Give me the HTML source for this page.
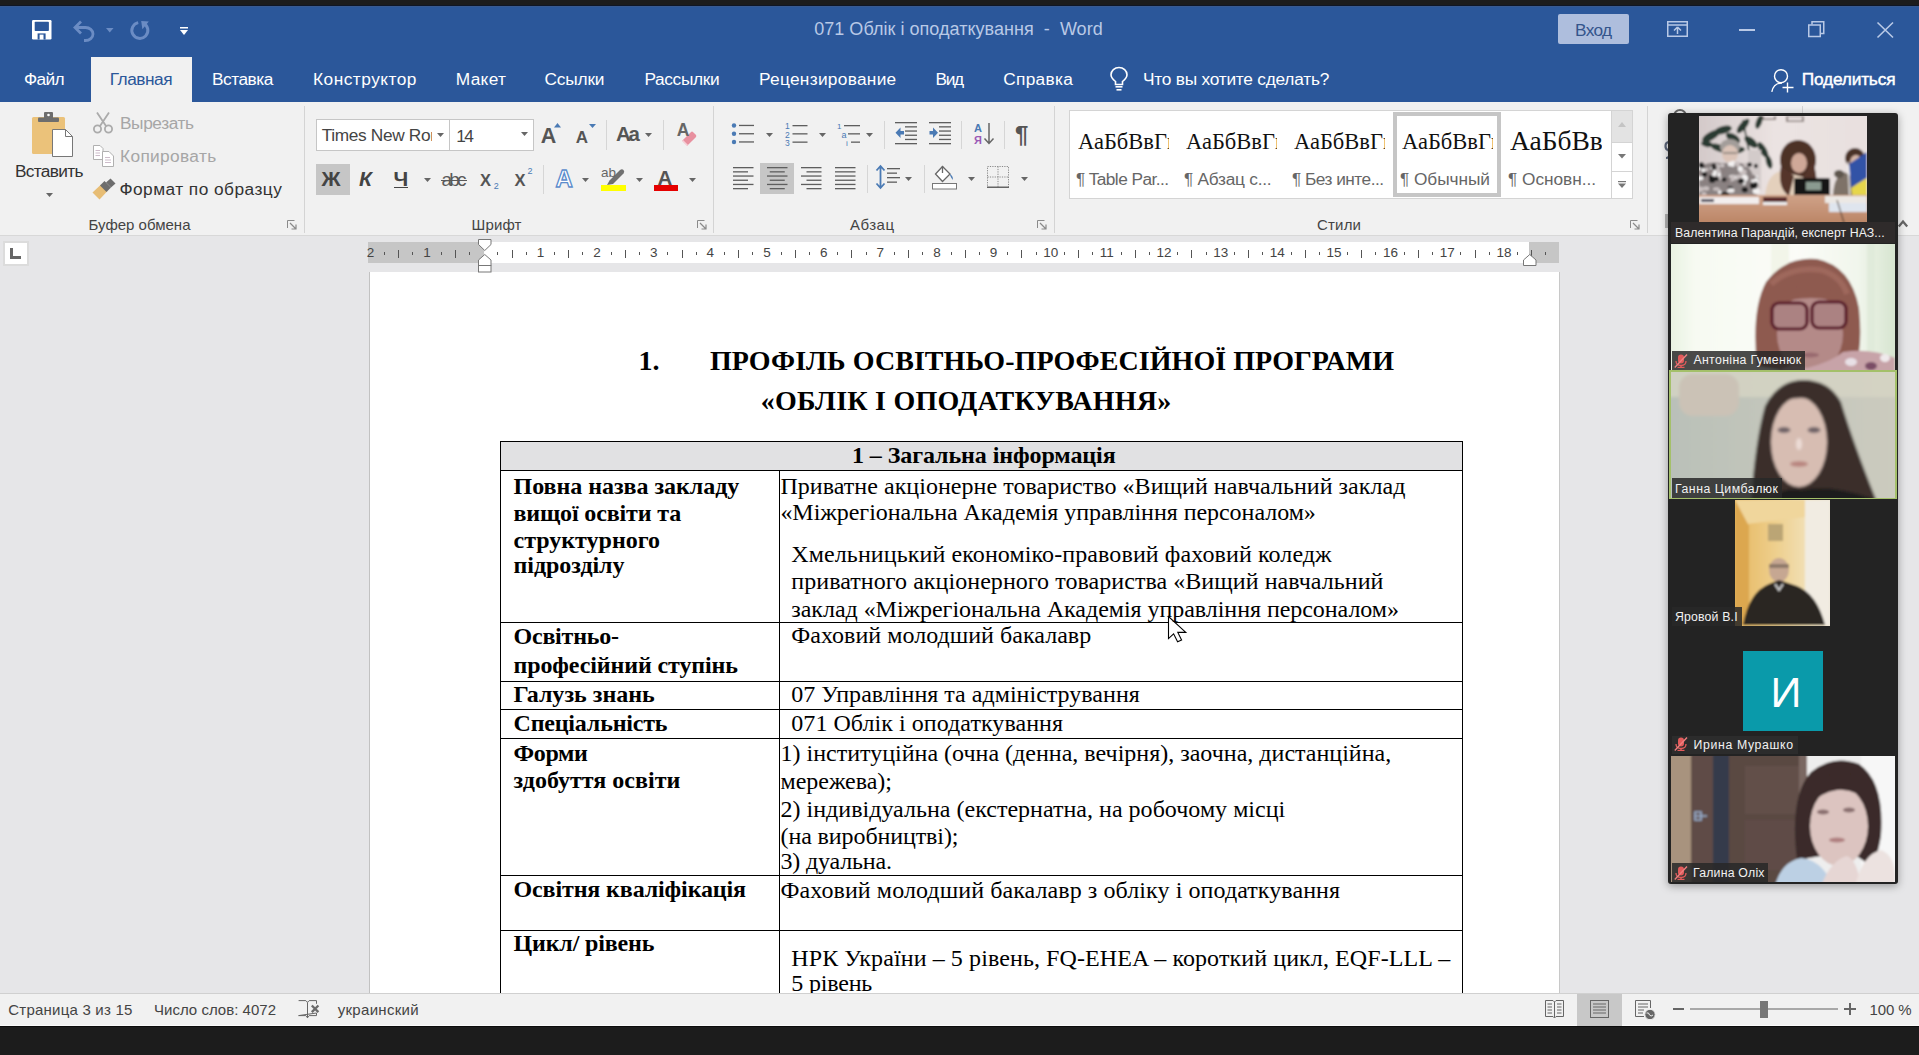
<!DOCTYPE html>
<html><head><meta charset="utf-8"><title>Word</title>
<style>*{margin:0;padding:0;box-sizing:border-box}
html,body{width:1919px;height:1055px;overflow:hidden;background:#e6e6e6;font-family:"Liberation Sans",sans-serif}
.a{position:absolute}
.t{position:absolute;white-space:pre;line-height:1}
svg{position:absolute;overflow:visible}
</style></head><body>
<div class="a" style="left:0px;top:0px;width:1919px;height:6px;background:#1c1c1c;"></div>
<div class="a" style="left:0px;top:6px;width:1919px;height:96px;background:#2b579a;"></div>
<div class="a" style="left:0px;top:102px;width:1919px;height:134px;background:#f1f1f1;"></div>
<div class="a" style="left:0px;top:235px;width:1919px;height:1px;background:#d8d8d8;"></div>
<div class="a" style="left:0px;top:236px;width:1919px;height:757px;background:#e6e6e8;"></div>
<div class="a" style="left:370px;top:272px;width:1189px;height:721px;background:#fff;"></div>
<div class="a" style="left:369px;top:272px;width:1px;height:721px;background:#c2c2c2;"></div>
<div class="a" style="left:1559px;top:272px;width:1px;height:721px;background:#c8c8c8;"></div>
<div class="a" style="left:501px;top:442px;width:962px;height:28px;background:#e1e1e3;"></div>
<div class="a" style="left:500px;top:441px;width:963px;height:1px;background:#000;"></div>
<div class="a" style="left:500px;top:470px;width:963px;height:1px;background:#000;"></div>
<div class="a" style="left:500px;top:622px;width:963px;height:1px;background:#000;"></div>
<div class="a" style="left:500px;top:681px;width:963px;height:1px;background:#000;"></div>
<div class="a" style="left:500px;top:709px;width:963px;height:1px;background:#000;"></div>
<div class="a" style="left:500px;top:738px;width:963px;height:1px;background:#000;"></div>
<div class="a" style="left:500px;top:875px;width:963px;height:1px;background:#000;"></div>
<div class="a" style="left:500px;top:930px;width:963px;height:1px;background:#000;"></div>
<div class="a" style="left:500px;top:441px;width:1px;height:552px;background:#000;"></div>
<div class="a" style="left:1462px;top:441px;width:1px;height:552px;background:#000;"></div>
<div class="a" style="left:779px;top:470px;width:1px;height:523px;background:#000;"></div>
<svg style="left:31.5px;top:19.5px;" width="20" height="20" viewBox="0 0 20 20"><rect x="0" y="0" width="19.5" height="19.5" rx="1.2" fill="#fff"/><rect x="2.7" y="1.8" width="14.2" height="9.2" rx="0.8" fill="#2b579a"/><rect x="5.6" y="13.4" width="8" height="6.1" fill="#2b579a"/><rect x="7.6" y="14.6" width="3.9" height="4.9" fill="#fff"/></svg>
<svg style="left:73px;top:20px;" width="23" height="21" viewBox="0 0 23 21"><path d="M8 1.5 L2 7.5 L8 13.5" fill="none" stroke="#6b8cc4" stroke-width="2.8" stroke-linejoin="miter"/><path d="M2.5 7.5 H12.5 A7.5 6.5 0 0 1 12.5 20.5 H11" fill="none" stroke="#6b8cc4" stroke-width="2.8"/></svg>
<svg style="left:105.5px;top:27.5px;" width="7.5" height="4.5" viewBox="0 0 7.5 4.5"><path d="M0 0H7.5L3.75 4.5Z" fill="#6b8cc4"/></svg>
<svg style="left:129.5px;top:20px;" width="21" height="21" viewBox="0 0 21 21"><path d="M8.2 2.6 A8 8 0 1 0 13.5 3.3" fill="none" stroke="#6b8cc4" stroke-width="3"/><path d="M11.2 0.9 L18.8 1.6 L12.4 9.2 Z" fill="#6b8cc4"/></svg>
<svg style="left:180px;top:27px;" width="8" height="9" viewBox="0 0 8 9"><rect x="0" y="0" width="8" height="1.5" fill="#fff"/><path d="M0 3H8L4 8Z" fill="#fff"/></svg>
<div class="a" style="left:1558px;top:14px;width:71px;height:30px;background:#aebedd;border-radius:2px;"></div>
<svg style="left:1667px;top:21px;" width="21" height="16" viewBox="0 0 21 16"><rect x="0.75" y="0.75" width="19.5" height="14.5" fill="none" stroke="#b9c9e6" stroke-width="1.5"/><line x1="0.75" y1="4" x2="20" y2="4" stroke="#b9c9e6" stroke-width="1.5"/><path d="M10.5 6 L7 9.5 M10.5 6 L14 9.5 M10.5 6.5 V13" stroke="#b9c9e6" stroke-width="1.5" fill="none"/></svg>
<div class="a" style="left:1739px;top:29px;width:16px;height:1.6px;background:#b9c9e6;"></div>
<svg style="left:1808px;top:21px;" width="17" height="16" viewBox="0 0 17 16"><rect x="0.75" y="4" width="11.5" height="11.5" fill="none" stroke="#b9c9e6" stroke-width="1.5"/><path d="M4 3.5 V0.75 H15.75 V12.5 H12.5" fill="none" stroke="#b9c9e6" stroke-width="1.5"/></svg>
<svg style="left:1876.5px;top:21.5px;" width="17" height="16" viewBox="0 0 17 16"><path d="M0.5 0.5 L16 15.5 M16 0.5 L0.5 15.5" stroke="#b9c9e6" stroke-width="1.6"/></svg>
<div class="a" style="left:91px;top:57px;width:101px;height:46px;background:#f1f1f1;"></div>
<svg style="left:1109.5px;top:67px;" width="18" height="24" viewBox="0 0 18 24"><path d="M5.5 17.5 V14.5 C3 12.5 1 10.5 1 7.8 A8 7.3 0 0 1 17 7.8 C17 10.5 15 12.5 12.5 14.5 V17.5 Z" fill="none" stroke="#fff" stroke-width="1.6"/><rect x="5.5" y="19" width="7" height="1.6" fill="#fff"/><rect x="6.5" y="22" width="5" height="1.6" fill="#fff"/></svg>
<svg style="left:1770.5px;top:68.5px;" width="24" height="24" viewBox="0 0 24 24"><circle cx="10" cy="7.2" r="6.5" fill="none" stroke="#fff" stroke-width="1.4"/><path d="M0.8 22.8 C2 17 6 14 11 14" fill="none" stroke="#fff" stroke-width="1.4"/><path d="M16.5 13.5 V23.5 M11.5 18.5 H22.5" stroke="#fff" stroke-width="1.4"/></svg>
<div class="a" style="left:304px;top:106px;width:1px;height:127px;background:#d4d4d4;"></div>
<div class="a" style="left:713px;top:106px;width:1px;height:127px;background:#d4d4d4;"></div>
<div class="a" style="left:1054px;top:106px;width:1px;height:127px;background:#d4d4d4;"></div>
<div class="a" style="left:1647px;top:106px;width:1px;height:127px;background:#d4d4d4;"></div>
<svg style="left:287px;top:220px;" width="10" height="9" viewBox="0 0 10 9"><path d="M0.5 8 V0.5 H7.5" fill="none" stroke="#8a8a8a" stroke-width="1"/><path d="M3 3 L8.5 8.5 M9 4.5 V9 H4.5" fill="none" stroke="#8a8a8a" stroke-width="1.2"/></svg>
<svg style="left:697px;top:220px;" width="10" height="9" viewBox="0 0 10 9"><path d="M0.5 8 V0.5 H7.5" fill="none" stroke="#8a8a8a" stroke-width="1"/><path d="M3 3 L8.5 8.5 M9 4.5 V9 H4.5" fill="none" stroke="#8a8a8a" stroke-width="1.2"/></svg>
<svg style="left:1037px;top:220px;" width="10" height="9" viewBox="0 0 10 9"><path d="M0.5 8 V0.5 H7.5" fill="none" stroke="#8a8a8a" stroke-width="1"/><path d="M3 3 L8.5 8.5 M9 4.5 V9 H4.5" fill="none" stroke="#8a8a8a" stroke-width="1.2"/></svg>
<svg style="left:1630px;top:220px;" width="10" height="9" viewBox="0 0 10 9"><path d="M0.5 8 V0.5 H7.5" fill="none" stroke="#8a8a8a" stroke-width="1"/><path d="M3 3 L8.5 8.5 M9 4.5 V9 H4.5" fill="none" stroke="#8a8a8a" stroke-width="1.2"/></svg>
<svg style="left:32px;top:112px;" width="42" height="46" viewBox="0 0 42 46"><rect x="0" y="5" width="33" height="37" rx="1.5" fill="#ebc27a"/><rect x="6" y="5.5" width="21" height="4.5" rx="1" fill="#6d6d6d"/><rect x="12" y="0" width="9" height="7" rx="1" fill="#6d6d6d"/><circle cx="16.5" cy="3" r="1.3" fill="#fff"/><path d="M20.5 17.5 H33.5 L40.5 24.5 V44.5 H20.5 Z" fill="#fff" stroke="#777" stroke-width="1"/><path d="M33.5 17.5 V24.5 H40.5" fill="none" stroke="#777" stroke-width="1"/></svg>
<svg style="left:46px;top:193px;" width="7" height="4" viewBox="0 0 7 4"><path d="M0 0H7L3.5 4Z" fill="#666"/></svg>
<svg style="left:93px;top:112px;" width="20" height="22" viewBox="0 0 20 22"><path d="M4 0.5 L13 14 M16 0.5 L7 14" stroke="#ababab" stroke-width="1.8" fill="none"/><circle cx="4.5" cy="17" r="3.6" fill="none" stroke="#ababab" stroke-width="1.8"/><circle cx="15.5" cy="17" r="3.6" fill="none" stroke="#ababab" stroke-width="1.8"/></svg>
<svg style="left:93px;top:145px;" width="22" height="22" viewBox="0 0 22 22"><path d="M0.5 0.5 H7 L10 3.5 V14.5 H0.5 Z" fill="#fff" stroke="#b0b0b0"/><path d="M9.5 6.5 H16 L20.5 11 V21.5 H9.5 Z" fill="#fff" stroke="#b0b0b0"/><path d="M2.5 5.5H7M2.5 8H7M2.5 10.5H7M12 12.5H17M12 15H18M12 17.5H18" stroke="#c7b4c4" stroke-width="0.9"/></svg>
<svg style="left:92px;top:178.5px;" width="24" height="21" viewBox="0 0 24 21"><path d="M0.5 13.5 L9 5.5 L15.5 12 L7.5 20.5 Z" fill="#e7bd75"/><path d="M8 6.5 L12.5 2 L19 8.5 L14.5 13 Z" fill="#6d6d6d"/><path d="M14 3.5 L18.5 -0.5 L23.5 4.5 L19 8.5 Z" fill="#6d6d6d"/></svg>
<div class="a" style="left:316px;top:119px;width:134px;height:32px;background:#fff;border:1px solid #c6c6c6;"></div>
<div class="a" style="left:449px;top:119px;width:85px;height:32px;background:#fff;border:1px solid #c6c6c6;"></div>
<div class="a" style="left:317px;top:120px;width:115px;height:30px;overflow:hidden"><div class="t" style="left:4.7px;top:7.3px;font-family:'Liberation Sans',sans-serif;font-size:17.3px;color:#444;letter-spacing:-0.35px">Times New Roman</div></div>
<svg style="left:437px;top:132.5px;" width="7" height="4" viewBox="0 0 7 4"><path d="M0 0H7L3.5 4Z" fill="#666"/></svg>
<svg style="left:521px;top:132px;" width="7" height="4" viewBox="0 0 7 4"><path d="M0 0H7L3.5 4Z" fill="#666"/></svg>
<svg style="left:554px;top:123px;" width="7" height="4.5" viewBox="0 0 7 4.5"><path d="M0 4.5H7L3.5 0Z" fill="#4a7ab4"/></svg>
<svg style="left:588.5px;top:124px;" width="7" height="4" viewBox="0 0 7 4"><path d="M0 0H7L3.5 4Z" fill="#4a7ab4"/></svg>
<div class="a" style="left:606px;top:120px;width:1px;height:30px;background:#d6d6d6;"></div>
<svg style="left:645px;top:132.7px;" width="7" height="4" viewBox="0 0 7 4"><path d="M0 0H7L3.5 4Z" fill="#666"/></svg>
<div class="a" style="left:663px;top:120px;width:1px;height:30px;background:#d6d6d6;"></div>
<svg style="left:681px;top:129.5px;" width="16" height="16" viewBox="0 0 16 16"><path d="M1.2 10.8 L9.8 2.2 Q11 1 12.2 2.2 L14.8 4.8 Q16 6 14.8 7.2 L6.2 15.8 Z" fill="#e8909f"/><path d="M1.5 10.5 L6.5 15.5" stroke="#f6d0d8" stroke-width="1.6"/></svg>
<div class="a" style="left:316px;top:164px;width:34px;height:31px;background:#c6c6c6;"></div>
<div class="a" style="left:394px;top:186.5px;width:14px;height:1.4px;background:#444;"></div>
<svg style="left:423.5px;top:178px;" width="7" height="4" viewBox="0 0 7 4"><path d="M0 0H7L3.5 4Z" fill="#666"/></svg>
<div class="a" style="left:441px;top:179.5px;width:26px;height:1.2px;background:#5a5a5a;"></div>
<div class="a" style="left:543px;top:165px;width:1px;height:29px;background:#d6d6d6;"></div>
<svg style="left:582px;top:178px;" width="7" height="4" viewBox="0 0 7 4"><path d="M0 0H7L3.5 4Z" fill="#666"/></svg>
<svg style="left:606px;top:168.5px;" width="19" height="17" viewBox="0 0 19 17"><path d="M1 16 L3.5 11.5 L14 1 Q16 -0.5 17.5 1 Q19 2.5 17.5 4.5 L7 15 Z" fill="#707070"/></svg>
<div class="a" style="left:601px;top:185px;width:24.5px;height:6px;background:#ffff00;"></div>
<svg style="left:636px;top:178px;" width="7" height="4" viewBox="0 0 7 4"><path d="M0 0H7L3.5 4Z" fill="#666"/></svg>
<div class="a" style="left:654px;top:185px;width:24px;height:6px;background:#e50000;"></div>
<svg style="left:689px;top:178px;" width="7" height="4" viewBox="0 0 7 4"><path d="M0 0H7L3.5 4Z" fill="#666"/></svg>
<svg style="left:731px;top:123px;" width="24" height="23" viewBox="0 0 24 23"><circle cx="3" cy="2.5" r="2.2" fill="#4a7ab4"/><circle cx="3" cy="10.8" r="2.2" fill="#4a7ab4"/><circle cx="3" cy="19" r="2.2" fill="#4a7ab4"/><rect x="8" y="1.8" width="15" height="1.3" fill="#5e5e5e"/><rect x="8" y="10.1" width="15" height="1.3" fill="#5e5e5e"/><rect x="8" y="18.3" width="15" height="1.3" fill="#5e5e5e"/></svg>
<svg style="left:766px;top:132.5px;" width="7" height="4" viewBox="0 0 7 4"><path d="M0 0H7L3.5 4Z" fill="#666"/></svg>
<svg style="left:785px;top:122px;" width="23" height="25" viewBox="0 0 23 25"><text x="0" y="7" font-family="Liberation Sans" font-size="8.5" fill="#4a7ab4">1</text><text x="0" y="15.5" font-family="Liberation Sans" font-size="8.5" fill="#4a7ab4">2</text><text x="0" y="24" font-family="Liberation Sans" font-size="8.5" fill="#4a7ab4">3</text><rect x="7.5" y="3" width="15" height="1.3" fill="#5e5e5e"/><rect x="7.5" y="11.2" width="15" height="1.3" fill="#5e5e5e"/><rect x="7.5" y="19.5" width="15" height="1.3" fill="#5e5e5e"/></svg>
<svg style="left:819px;top:132.5px;" width="7" height="4" viewBox="0 0 7 4"><path d="M0 0H7L3.5 4Z" fill="#666"/></svg>
<svg style="left:837px;top:122px;" width="24" height="25" viewBox="0 0 24 25"><text x="0" y="7" font-family="Liberation Sans" font-size="8" fill="#4a7ab4">1</text><text x="4.5" y="15.5" font-family="Liberation Sans" font-size="9" fill="#4a7ab4">a</text><text x="9" y="24" font-family="Liberation Sans" font-size="8" fill="#4a7ab4">i</text><rect x="7" y="3" width="16" height="1.3" fill="#5e5e5e"/><rect x="11" y="11.2" width="12" height="1.3" fill="#5e5e5e"/><rect x="14" y="19.5" width="9" height="1.3" fill="#5e5e5e"/></svg>
<svg style="left:866px;top:132.5px;" width="7" height="4" viewBox="0 0 7 4"><path d="M0 0H7L3.5 4Z" fill="#666"/></svg>
<div class="a" style="left:884px;top:121px;width:1px;height:28px;background:#d6d6d6;"></div>
<svg style="left:895px;top:122px;" width="23" height="22" viewBox="0 0 23 22"><rect x="0" y="0" width="22" height="1.3" fill="#5e5e5e"/><rect x="10" y="4.2" width="12" height="1.3" fill="#5e5e5e"/><rect x="10" y="8.4" width="12" height="1.3" fill="#5e5e5e"/><rect x="10" y="12.6" width="12" height="1.3" fill="#5e5e5e"/><rect x="10" y="16.8" width="12" height="1.3" fill="#5e5e5e"/><rect x="0" y="21" width="22" height="1.3" fill="#5e5e5e"/><path d="M0.5 10.7 L5.5 5.5 V9 H9 V12.5 H5.5 V16 Z" fill="#4a7ab4"/></svg>
<svg style="left:928.5px;top:122px;" width="23" height="22" viewBox="0 0 23 22"><rect x="0" y="0" width="22" height="1.3" fill="#5e5e5e"/><rect x="10" y="4.2" width="12" height="1.3" fill="#5e5e5e"/><rect x="10" y="8.4" width="12" height="1.3" fill="#5e5e5e"/><rect x="10" y="12.6" width="12" height="1.3" fill="#5e5e5e"/><rect x="10" y="16.8" width="12" height="1.3" fill="#5e5e5e"/><rect x="0" y="21" width="22" height="1.3" fill="#5e5e5e"/><path d="M9 10.7 L4 5.5 V9 H0.5 V12.5 H4 V16 Z" fill="#4a7ab4"/></svg>
<div class="a" style="left:961px;top:121px;width:1px;height:28px;background:#d6d6d6;"></div>
<svg style="left:974px;top:122px;" width="20" height="23" viewBox="0 0 20 23"><text x="0" y="10" font-family="Liberation Sans" font-weight="bold" font-size="11" fill="#4a7ab4">A</text><text x="0" y="21.5" font-family="Liberation Sans" font-weight="bold" font-size="11" fill="#9b59b6">Я</text><path d="M15 1 V21 M10.5 16.5 L15 21.5 L19.5 16.5" fill="none" stroke="#666" stroke-width="1.5"/></svg>
<div class="a" style="left:1004px;top:121px;width:1px;height:28px;background:#d6d6d6;"></div>
<div class="a" style="left:760px;top:163px;width:34px;height:31px;background:#c6c6c6;"></div>
<svg style="left:732.5px;top:166.5px;" width="22" height="22" viewBox="0 0 22 22"><rect x="0" y="0.0" width="20.5" height="1.3" fill="#5e5e5e"/><rect x="0" y="4.2" width="15" height="1.3" fill="#5e5e5e"/><rect x="0" y="8.4" width="20.5" height="1.3" fill="#5e5e5e"/><rect x="0" y="12.6" width="15" height="1.3" fill="#5e5e5e"/><rect x="0" y="16.8" width="20.5" height="1.3" fill="#5e5e5e"/><rect x="0" y="21.0" width="15" height="1.3" fill="#5e5e5e"/></svg>
<svg style="left:767px;top:166.5px;" width="22" height="22" viewBox="0 0 22 22"><rect x="0" y="0.0" width="20.5" height="1.3" fill="#5e5e5e"/><rect x="2.75" y="4.2" width="15" height="1.3" fill="#5e5e5e"/><rect x="0" y="8.4" width="20.5" height="1.3" fill="#5e5e5e"/><rect x="2.75" y="12.6" width="15" height="1.3" fill="#5e5e5e"/><rect x="0" y="16.8" width="20.5" height="1.3" fill="#5e5e5e"/><rect x="2.75" y="21.0" width="15" height="1.3" fill="#5e5e5e"/></svg>
<svg style="left:801px;top:166.5px;" width="22" height="22" viewBox="0 0 22 22"><rect x="0" y="0.0" width="20.5" height="1.3" fill="#5e5e5e"/><rect x="5.5" y="4.2" width="15" height="1.3" fill="#5e5e5e"/><rect x="0" y="8.4" width="20.5" height="1.3" fill="#5e5e5e"/><rect x="5.5" y="12.6" width="15" height="1.3" fill="#5e5e5e"/><rect x="0" y="16.8" width="20.5" height="1.3" fill="#5e5e5e"/><rect x="5.5" y="21.0" width="15" height="1.3" fill="#5e5e5e"/></svg>
<svg style="left:835px;top:166.5px;" width="22" height="22" viewBox="0 0 22 22"><rect x="0" y="0.0" width="20.5" height="1.3" fill="#5e5e5e"/><rect x="0" y="4.2" width="20.5" height="1.3" fill="#5e5e5e"/><rect x="0" y="8.4" width="20.5" height="1.3" fill="#5e5e5e"/><rect x="0" y="12.6" width="20.5" height="1.3" fill="#5e5e5e"/><rect x="0" y="16.8" width="20.5" height="1.3" fill="#5e5e5e"/><rect x="0" y="21.0" width="20.5" height="1.3" fill="#5e5e5e"/></svg>
<div class="a" style="left:866.5px;top:165px;width:1px;height:28px;background:#d6d6d6;"></div>
<svg style="left:876px;top:165px;" width="24" height="24" viewBox="0 0 24 24"><path d="M4.5 2 V22 M0.5 5.5 L4.5 1 L8.5 5.5 M0.5 18.5 L4.5 23 L8.5 18.5" fill="none" stroke="#4a7ab4" stroke-width="1.8"/><rect x="11" y="3" width="13" height="1.3" fill="#5e5e5e"/><rect x="11" y="7.5" width="10" height="1.3" fill="#5e5e5e"/><rect x="11" y="12" width="13" height="1.3" fill="#5e5e5e"/><rect x="11" y="16.5" width="10" height="1.3" fill="#5e5e5e"/></svg>
<svg style="left:905px;top:177px;" width="7" height="4" viewBox="0 0 7 4"><path d="M0 0H7L3.5 4Z" fill="#666"/></svg>
<div class="a" style="left:923.5px;top:165px;width:1px;height:28px;background:#d6d6d6;"></div>
<svg style="left:932px;top:165px;" width="26" height="25" viewBox="0 0 26 25"><path d="M10.5 1.5 L3.5 9 L10.5 16.5 L18 9 Z" fill="#fff" stroke="#666" stroke-width="1.3"/><path d="M10.5 1 V8" stroke="#666" stroke-width="1.3"/><path d="M18.5 9 Q21.5 12 21 15 Q19 13 18 10" fill="#4a7ab4"/><rect x="0.5" y="18.5" width="24" height="5.5" fill="#fff" stroke="#777"/></svg>
<svg style="left:968px;top:177px;" width="7" height="4" viewBox="0 0 7 4"><path d="M0 0H7L3.5 4Z" fill="#666"/></svg>
<svg style="left:986.5px;top:165.5px;" width="22" height="22" viewBox="0 0 22 22"><rect x="0.5" y="0.5" width="21" height="21" fill="none" stroke="#888" stroke-width="1" stroke-dasharray="1.2 1.2"/><path d="M11 0.5 V21.5 M0.5 11 H21.5" stroke="#888" stroke-width="1" stroke-dasharray="1.2 1.2"/><rect x="0" y="20.5" width="22" height="1.5" fill="#666"/></svg>
<svg style="left:1020.5px;top:177px;" width="7" height="4" viewBox="0 0 7 4"><path d="M0 0H7L3.5 4Z" fill="#666"/></svg>
<div class="a" style="left:1068.5px;top:109.5px;width:543px;height:89px;background:#fff;border:1px solid #d4d4d4;"></div>
<div class="a" style="left:1610.5px;top:109.5px;width:22.5px;height:89px;background:#fff;border:1px solid #d4d4d4;"></div>
<div class="a" style="left:1611.5px;top:110.5px;width:20.5px;height:31px;background:#e3e3e3;"></div>
<div class="a" style="left:1611px;top:141.5px;width:22px;height:1px;background:#d4d4d4;"></div>
<div class="a" style="left:1611px;top:170.5px;width:22px;height:1px;background:#d4d4d4;"></div>
<svg style="left:1618px;top:122px;" width="8" height="5" viewBox="0 0 8 5"><path d="M0 5H8L4 0Z" fill="#c4c4c4"/></svg>
<svg style="left:1618px;top:154px;" width="8" height="4.5" viewBox="0 0 8 4.5"><path d="M0 0H8L4.0 4.5Z" fill="#777"/></svg>
<svg style="left:1618px;top:181px;" width="8" height="7" viewBox="0 0 8 7"><rect x="0" y="0" width="8" height="1.2" fill="#777"/><path d="M0 2.5H8L4 7Z" fill="#777"/></svg>
<div class="a" style="left:1393px;top:112px;width:108px;height:85px;background:none;border:4px solid #c6c6c6;"></div>
<div class="a" style="left:1078px;top:126px;width:90.5px;height:30px;overflow:hidden"><div class="t" style="left:0;top:5.06px;font-family:'Liberation Serif',serif;font-size:22.5px;color:#111">АаБбВвГг</div></div>
<div class="a" style="left:1186px;top:126px;width:90.5px;height:30px;overflow:hidden"><div class="t" style="left:0;top:5.06px;font-family:'Liberation Serif',serif;font-size:22.5px;color:#111">АаБбВвГг</div></div>
<div class="a" style="left:1294px;top:126px;width:90.5px;height:30px;overflow:hidden"><div class="t" style="left:0;top:5.06px;font-family:'Liberation Serif',serif;font-size:22.5px;color:#111">АаБбВвГг</div></div>
<div class="a" style="left:1402px;top:126px;width:90.5px;height:30px;overflow:hidden"><div class="t" style="left:0;top:5.06px;font-family:'Liberation Serif',serif;font-size:22.5px;color:#111">АаБбВвГг</div></div>
<div class="a" style="left:1510px;top:126px;width:92px;height:30px;overflow:hidden"><div class="t" style="left:0;top:0.87px;font-family:'Liberation Serif',serif;font-size:27.5px;color:#111">АаБбВв</div></div>
<div class="a" style="left:1802px;top:106px;width:1px;height:8px;background:#d4d4d4;"></div>
<svg style="left:1672px;top:108px;" width="16" height="8" viewBox="0 0 16 8"><circle cx="8" cy="8" r="6" fill="none" stroke="#666" stroke-width="2"/></svg>
<svg style="left:1664.5px;top:141px;" width="5" height="18" viewBox="0 0 5 18"><path d="M4.5 1 Q0.5 1 0.5 5 Q0.5 8.5 3 9 Q4.5 10 4.5 13 Q4.5 17 1 17" fill="none" stroke="#5a6478" stroke-width="2.2"/></svg>
<div class="a" style="left:1664.5px;top:214px;width:4px;height:14px;background:#8a8a8a;opacity:0.6"></div>
<div class="a" style="left:3px;top:241px;width:26px;height:25px;background:#fff;border:2px solid #dcdcdc;"></div>
<svg style="left:10px;top:248px;" width="12" height="11" viewBox="0 0 12 11"><rect x="0" y="0" width="3" height="11" fill="#666"/><rect x="0" y="8" width="11" height="3" fill="#666"/></svg>
<div class="a" style="left:368px;top:242px;width:1191px;height:21px;background:#fff;"></div>
<div class="a" style="left:368px;top:242px;width:116px;height:21px;background:#c6c6c6;"></div>
<div class="a" style="left:1529px;top:242px;width:30px;height:21px;background:#c6c6c6;"></div>
<div class="a" style="left:384.0px;top:252px;width:1px;height:3px;background:#555;"></div>
<div class="a" style="left:398.0px;top:250px;width:1px;height:7.5px;background:#555;"></div>
<div class="a" style="left:412.0px;top:252px;width:1px;height:3px;background:#555;"></div>
<div class="a" style="left:440.5px;top:252px;width:1px;height:3px;background:#555;"></div>
<div class="a" style="left:454.5px;top:250px;width:1px;height:7.5px;background:#555;"></div>
<div class="a" style="left:469.0px;top:252px;width:1px;height:3px;background:#555;"></div>
<div class="a" style="left:497.0px;top:252px;width:1px;height:3px;background:#555;"></div>
<div class="a" style="left:511.5px;top:250px;width:1px;height:7.5px;background:#555;"></div>
<div class="a" style="left:525.5px;top:252px;width:1px;height:3px;background:#555;"></div>
<div class="a" style="left:554.0px;top:252px;width:1px;height:3px;background:#555;"></div>
<div class="a" style="left:568.0px;top:250px;width:1px;height:7.5px;background:#555;"></div>
<div class="a" style="left:582.0px;top:252px;width:1px;height:3px;background:#555;"></div>
<div class="a" style="left:610.5px;top:252px;width:1px;height:3px;background:#555;"></div>
<div class="a" style="left:624.5px;top:250px;width:1px;height:7.5px;background:#555;"></div>
<div class="a" style="left:639.0px;top:252px;width:1px;height:3px;background:#555;"></div>
<div class="a" style="left:667.0px;top:252px;width:1px;height:3px;background:#555;"></div>
<div class="a" style="left:681.5px;top:250px;width:1px;height:7.5px;background:#555;"></div>
<div class="a" style="left:695.5px;top:252px;width:1px;height:3px;background:#555;"></div>
<div class="a" style="left:724.0px;top:252px;width:1px;height:3px;background:#555;"></div>
<div class="a" style="left:738.0px;top:250px;width:1px;height:7.5px;background:#555;"></div>
<div class="a" style="left:752.0px;top:252px;width:1px;height:3px;background:#555;"></div>
<div class="a" style="left:780.5px;top:252px;width:1px;height:3px;background:#555;"></div>
<div class="a" style="left:794.5px;top:250px;width:1px;height:7.5px;background:#555;"></div>
<div class="a" style="left:808.5px;top:252px;width:1px;height:3px;background:#555;"></div>
<div class="a" style="left:837.0px;top:252px;width:1px;height:3px;background:#555;"></div>
<div class="a" style="left:851.0px;top:250px;width:1px;height:7.5px;background:#555;"></div>
<div class="a" style="left:865.5px;top:252px;width:1px;height:3px;background:#555;"></div>
<div class="a" style="left:893.5px;top:252px;width:1px;height:3px;background:#555;"></div>
<div class="a" style="left:908.0px;top:250px;width:1px;height:7.5px;background:#555;"></div>
<div class="a" style="left:922.0px;top:252px;width:1px;height:3px;background:#555;"></div>
<div class="a" style="left:950.5px;top:252px;width:1px;height:3px;background:#555;"></div>
<div class="a" style="left:964.5px;top:250px;width:1px;height:7.5px;background:#555;"></div>
<div class="a" style="left:978.5px;top:252px;width:1px;height:3px;background:#555;"></div>
<div class="a" style="left:1007.0px;top:252px;width:1px;height:3px;background:#555;"></div>
<div class="a" style="left:1021.0px;top:250px;width:1px;height:7.5px;background:#555;"></div>
<div class="a" style="left:1035.5px;top:252px;width:1px;height:3px;background:#555;"></div>
<div class="a" style="left:1063.5px;top:252px;width:1px;height:3px;background:#555;"></div>
<div class="a" style="left:1078.0px;top:250px;width:1px;height:7.5px;background:#555;"></div>
<div class="a" style="left:1092.0px;top:252px;width:1px;height:3px;background:#555;"></div>
<div class="a" style="left:1120.5px;top:252px;width:1px;height:3px;background:#555;"></div>
<div class="a" style="left:1134.5px;top:250px;width:1px;height:7.5px;background:#555;"></div>
<div class="a" style="left:1148.5px;top:252px;width:1px;height:3px;background:#555;"></div>
<div class="a" style="left:1177.0px;top:252px;width:1px;height:3px;background:#555;"></div>
<div class="a" style="left:1191.0px;top:250px;width:1px;height:7.5px;background:#555;"></div>
<div class="a" style="left:1205.5px;top:252px;width:1px;height:3px;background:#555;"></div>
<div class="a" style="left:1233.5px;top:252px;width:1px;height:3px;background:#555;"></div>
<div class="a" style="left:1248.0px;top:250px;width:1px;height:7.5px;background:#555;"></div>
<div class="a" style="left:1262.0px;top:252px;width:1px;height:3px;background:#555;"></div>
<div class="a" style="left:1290.5px;top:252px;width:1px;height:3px;background:#555;"></div>
<div class="a" style="left:1304.5px;top:250px;width:1px;height:7.5px;background:#555;"></div>
<div class="a" style="left:1318.5px;top:252px;width:1px;height:3px;background:#555;"></div>
<div class="a" style="left:1347.0px;top:252px;width:1px;height:3px;background:#555;"></div>
<div class="a" style="left:1361.0px;top:250px;width:1px;height:7.5px;background:#555;"></div>
<div class="a" style="left:1375.0px;top:252px;width:1px;height:3px;background:#555;"></div>
<div class="a" style="left:1403.5px;top:252px;width:1px;height:3px;background:#555;"></div>
<div class="a" style="left:1417.5px;top:250px;width:1px;height:7.5px;background:#555;"></div>
<div class="a" style="left:1432.0px;top:252px;width:1px;height:3px;background:#555;"></div>
<div class="a" style="left:1460.0px;top:252px;width:1px;height:3px;background:#555;"></div>
<div class="a" style="left:1474.5px;top:250px;width:1px;height:7.5px;background:#555;"></div>
<div class="a" style="left:1488.5px;top:252px;width:1px;height:3px;background:#555;"></div>
<div class="a" style="left:1517.0px;top:252px;width:1px;height:3px;background:#555;"></div>
<div class="a" style="left:1531.0px;top:250px;width:1px;height:7.5px;background:#555;"></div>
<div class="a" style="left:1545.0px;top:252px;width:1px;height:3px;background:#555;"></div>
<svg style="left:477.5px;top:238.5px;" width="14" height="34" viewBox="0 0 14 34"><path d="M0.5 0.5 H13 V5.5 L6.75 11.5 L0.5 5.5 Z" fill="#fff" stroke="#777"/><path d="M6.75 15.5 L13 21 V26.5 H0.5 V21 Z" fill="#fff" stroke="#777"/><rect x="0.5" y="26.5" width="12.5" height="6.5" fill="#fff" stroke="#777"/></svg>
<svg style="left:1522.5px;top:254px;" width="14" height="12" viewBox="0 0 14 12"><path d="M6.75 0.5 L13 6 V11.5 H0.5 V6 Z" fill="#fff" stroke="#777"/></svg>
<svg style="left:1898px;top:219px;" width="10" height="8" viewBox="0 0 10 8"><path d="M0.8 7.5 L5 2.5 L9.2 7.5" fill="none" stroke="#666" stroke-width="2.2"/></svg>
<svg style="left:1167.5px;top:615.5px;" width="20" height="28" viewBox="0 0 20 28"><path d="M0.5 0.5 V22.6 L5.6 17.8 L9.6 25.8 L13.6 24 L9.8 16.4 L17.8 16.4 Z" fill="#fff" stroke="#000" stroke-width="1.1" stroke-linejoin="miter"/></svg>
<div class="t" style="left:638.6px;top:347.35px;font-family:'Liberation Serif',serif;font-size:28px;font-weight:bold;color:#000;">1.</div>
<div class="t" style="left:710px;top:347.35px;font-family:'Liberation Serif',serif;font-size:28px;font-weight:bold;color:#000;letter-spacing:0.066px;">ПРОФІЛЬ ОСВІТНЬО-ПРОФЕСІЙНОЇ ПРОГРАМИ</div>
<div class="t" style="left:760.8px;top:387.45px;font-family:'Liberation Serif',serif;font-size:28px;font-weight:bold;color:#000;letter-spacing:0.232px;">«ОБЛІК І ОПОДАТКУВАННЯ»</div>
<div class="t" style="left:852px;top:443.10px;font-family:'Liberation Serif',serif;font-size:24px;font-weight:bold;color:#000;letter-spacing:-0.083px;">1 – Загальна інформація</div>
<div class="t" style="left:513.5px;top:473.90px;font-family:'Liberation Serif',serif;font-size:24px;font-weight:bold;color:#000;letter-spacing:-0.032px;">Повна назва закладу</div>
<div class="t" style="left:513.5px;top:500.90px;font-family:'Liberation Serif',serif;font-size:24px;font-weight:bold;color:#000;letter-spacing:-0.143px;">вищої освіти та</div>
<div class="t" style="left:513.5px;top:528.40px;font-family:'Liberation Serif',serif;font-size:24px;font-weight:bold;color:#000;letter-spacing:-0.004px;">структурного</div>
<div class="t" style="left:513.5px;top:553.40px;font-family:'Liberation Serif',serif;font-size:24px;font-weight:bold;color:#000;letter-spacing:-0.052px;">підрозділу</div>
<div class="t" style="left:780.4px;top:473.70px;font-family:'Liberation Serif',serif;font-size:24px;font-weight:normal;color:#000;letter-spacing:0.038px;">Приватне акціонерне товариство «Вищий навчальний заклад</div>
<div class="t" style="left:780.4px;top:500.30px;font-family:'Liberation Serif',serif;font-size:24px;font-weight:normal;color:#000;letter-spacing:-0.043px;">«Міжрегіональна Академія управління персоналом»</div>
<div class="t" style="left:791.3px;top:541.50px;font-family:'Liberation Serif',serif;font-size:24px;font-weight:normal;color:#000;letter-spacing:0.100px;">Хмельницький економіко-правовий фаховий коледж</div>
<div class="t" style="left:791.3px;top:569.00px;font-family:'Liberation Serif',serif;font-size:24px;font-weight:normal;color:#000;letter-spacing:0.050px;">приватного акціонерного товариства «Вищий навчальний</div>
<div class="t" style="left:791.3px;top:596.50px;font-family:'Liberation Serif',serif;font-size:24px;font-weight:normal;color:#000;letter-spacing:-0.043px;">заклад «Міжрегіональна Академія управління персоналом»</div>
<div class="t" style="left:513.5px;top:624.30px;font-family:'Liberation Serif',serif;font-size:24px;font-weight:bold;color:#000;letter-spacing:-0.219px;">Освітньо-</div>
<div class="t" style="left:513.5px;top:652.50px;font-family:'Liberation Serif',serif;font-size:24px;font-weight:bold;color:#000;letter-spacing:-0.111px;">професійний ступінь</div>
<div class="t" style="left:791.3px;top:623.00px;font-family:'Liberation Serif',serif;font-size:24px;font-weight:normal;color:#000;letter-spacing:0.027px;">Фаховий молодший бакалавр</div>
<div class="t" style="left:513.5px;top:682.10px;font-family:'Liberation Serif',serif;font-size:24px;font-weight:bold;color:#000;letter-spacing:0.012px;">Галузь знань</div>
<div class="t" style="left:791.3px;top:682.10px;font-family:'Liberation Serif',serif;font-size:24px;font-weight:normal;color:#000;letter-spacing:0.018px;">07 Управління та адміністрування</div>
<div class="t" style="left:513.5px;top:710.70px;font-family:'Liberation Serif',serif;font-size:24px;font-weight:bold;color:#000;letter-spacing:-0.193px;">Спеціальність</div>
<div class="t" style="left:791.3px;top:710.70px;font-family:'Liberation Serif',serif;font-size:24px;font-weight:normal;color:#000;letter-spacing:0.049px;">071 Облік і оподаткування</div>
<div class="t" style="left:513.5px;top:740.80px;font-family:'Liberation Serif',serif;font-size:24px;font-weight:bold;color:#000;letter-spacing:-0.345px;">Форми</div>
<div class="t" style="left:513.5px;top:768.40px;font-family:'Liberation Serif',serif;font-size:24px;font-weight:bold;color:#000;letter-spacing:0.015px;">здобуття освіти</div>
<div class="t" style="left:780.5px;top:741.30px;font-family:'Liberation Serif',serif;font-size:24px;font-weight:normal;color:#000;letter-spacing:0.005px;">1) інституційна (очна (денна, вечірня), заочна, дистанційна,</div>
<div class="t" style="left:780.5px;top:768.90px;font-family:'Liberation Serif',serif;font-size:24px;font-weight:normal;color:#000;letter-spacing:-0.028px;">мережева);</div>
<div class="t" style="left:780.5px;top:796.50px;font-family:'Liberation Serif',serif;font-size:24px;font-weight:normal;color:#000;letter-spacing:0.015px;">2) індивідуальна (екстернатна, на робочому місці</div>
<div class="t" style="left:780.5px;top:824.20px;font-family:'Liberation Serif',serif;font-size:24px;font-weight:normal;color:#000;letter-spacing:-0.098px;">(на виробництві);</div>
<div class="t" style="left:780.5px;top:849.30px;font-family:'Liberation Serif',serif;font-size:24px;font-weight:normal;color:#000;letter-spacing:-0.167px;">3) дуальна.</div>
<div class="t" style="left:513.5px;top:876.90px;font-family:'Liberation Serif',serif;font-size:24px;font-weight:bold;color:#000;letter-spacing:-0.121px;">Освітня кваліфікація</div>
<div class="t" style="left:780.5px;top:878.20px;font-family:'Liberation Serif',serif;font-size:24px;font-weight:normal;color:#000;letter-spacing:0.082px;">Фаховий молодший бакалавр з обліку і оподаткування</div>
<div class="t" style="left:513.5px;top:931.40px;font-family:'Liberation Serif',serif;font-size:24px;font-weight:bold;color:#000;letter-spacing:-0.155px;">Цикл/ рівень</div>
<div class="t" style="left:791.3px;top:946.00px;font-family:'Liberation Serif',serif;font-size:24px;font-weight:normal;color:#000;letter-spacing:0.095px;">НРК України – 5 рівень, FQ-EHEA – короткий цикл, EQF-LLL –</div>
<div class="t" style="left:791.3px;top:971.10px;font-family:'Liberation Serif',serif;font-size:24px;font-weight:normal;color:#000;letter-spacing:-0.188px;">5 рівень</div>
<div class="t" style="left:814.2px;top:20.06px;font-family:'Liberation Sans',sans-serif;font-size:18px;font-weight:normal;color:#b9c9e6;letter-spacing:0.033px;">071 Облік і оподаткування  -  Word</div>
<div class="t" style="left:1575px;top:21.56px;font-family:'Liberation Sans',sans-serif;font-size:17.3px;font-weight:normal;color:#34558c;letter-spacing:-0.698px;">Вход</div>
<div class="t" style="left:24.1px;top:71.06px;font-family:'Liberation Sans',sans-serif;font-size:17.3px;font-weight:normal;color:#fff;letter-spacing:-0.633px;">Файл</div>
<div class="t" style="left:109.7px;top:71.06px;font-family:'Liberation Sans',sans-serif;font-size:17.3px;font-weight:normal;color:#2b579a;letter-spacing:-0.480px;">Главная</div>
<div class="t" style="left:211.9px;top:71.06px;font-family:'Liberation Sans',sans-serif;font-size:17.3px;font-weight:normal;color:#fff;letter-spacing:-0.456px;">Вставка</div>
<div class="t" style="left:313px;top:71.06px;font-family:'Liberation Sans',sans-serif;font-size:17.3px;font-weight:normal;color:#fff;letter-spacing:0.495px;">Конструктор</div>
<div class="t" style="left:455.8px;top:71.06px;font-family:'Liberation Sans',sans-serif;font-size:17.3px;font-weight:normal;color:#fff;letter-spacing:0.295px;">Макет</div>
<div class="t" style="left:544.6px;top:71.06px;font-family:'Liberation Sans',sans-serif;font-size:17.3px;font-weight:normal;color:#fff;letter-spacing:-0.209px;">Ссылки</div>
<div class="t" style="left:644.4px;top:71.06px;font-family:'Liberation Sans',sans-serif;font-size:17.3px;font-weight:normal;color:#fff;letter-spacing:-0.325px;">Рассылки</div>
<div class="t" style="left:759px;top:71.06px;font-family:'Liberation Sans',sans-serif;font-size:17.3px;font-weight:normal;color:#fff;letter-spacing:0.288px;">Рецензирование</div>
<div class="t" style="left:935.6px;top:71.06px;font-family:'Liberation Sans',sans-serif;font-size:17.3px;font-weight:normal;color:#fff;letter-spacing:-1.333px;">Вид</div>
<div class="t" style="left:1003.3px;top:71.06px;font-family:'Liberation Sans',sans-serif;font-size:17.3px;font-weight:normal;color:#fff;letter-spacing:0.284px;">Справка</div>
<div class="t" style="left:1143px;top:70.76px;font-family:'Liberation Sans',sans-serif;font-size:17.3px;font-weight:normal;color:#fff;letter-spacing:-0.226px;">Что вы хотите сделать?</div>
<div class="t" style="left:1801.8px;top:71.06px;font-family:'Liberation Sans',sans-serif;font-size:17.3px;font-weight:normal;color:#fff;letter-spacing:-0.193px;-webkit-text-stroke:0.45px #fff;">Поделиться</div>
<div class="t" style="left:88.6px;top:216.70px;font-family:'Liberation Sans',sans-serif;font-size:15px;font-weight:normal;color:#444;letter-spacing:-0.003px;">Буфер обмена</div>
<div class="t" style="left:471.5px;top:216.70px;font-family:'Liberation Sans',sans-serif;font-size:15px;font-weight:normal;color:#444;letter-spacing:0.160px;">Шрифт</div>
<div class="t" style="left:850px;top:216.70px;font-family:'Liberation Sans',sans-serif;font-size:15px;font-weight:normal;color:#444;letter-spacing:0.480px;">Абзац</div>
<div class="t" style="left:1317px;top:216.70px;font-family:'Liberation Sans',sans-serif;font-size:15px;font-weight:normal;color:#444;letter-spacing:0.195px;">Стили</div>
<div class="t" style="left:15px;top:163.16px;font-family:'Liberation Sans',sans-serif;font-size:17.3px;font-weight:normal;color:#333;letter-spacing:-0.695px;">Вставить</div>
<div class="t" style="left:120px;top:115.06px;font-family:'Liberation Sans',sans-serif;font-size:17.3px;font-weight:normal;color:#a6a6a6;letter-spacing:-0.411px;">Вырезать</div>
<div class="t" style="left:120px;top:147.86px;font-family:'Liberation Sans',sans-serif;font-size:17.3px;font-weight:normal;color:#a6a6a6;letter-spacing:0.350px;">Копировать</div>
<div class="t" style="left:119.4px;top:180.76px;font-family:'Liberation Sans',sans-serif;font-size:17.3px;font-weight:normal;color:#333;letter-spacing:0.464px;">Формат по образцу</div>
<div class="t" style="left:456.3px;top:127.96px;font-family:'Liberation Sans',sans-serif;font-size:17.3px;font-weight:normal;color:#444;letter-spacing:-1.534px;">14</div>
<div class="t" style="left:540.8px;top:125.60px;font-family:'Liberation Sans',sans-serif;font-size:21.5px;font-weight:bold;color:#555;">A</div>
<div class="t" style="left:575.8px;top:129.41px;font-family:'Liberation Sans',sans-serif;font-size:17px;font-weight:bold;color:#555;">A</div>
<div class="t" style="left:616px;top:123.85px;font-family:'Liberation Sans',sans-serif;font-size:20.5px;font-weight:bold;color:#555;letter-spacing:-2.219px;">Aa</div>
<div class="t" style="left:676.8px;top:121.99px;font-family:'Liberation Sans',sans-serif;font-size:17.5px;font-weight:bold;color:#666;">A</div>
<div class="t" style="left:321.5px;top:168.12px;font-family:'Liberation Sans',sans-serif;font-size:21px;font-weight:bold;color:#444;">Ж</div>
<div class="t" style="left:359px;top:168.12px;font-family:'Liberation Sans',sans-serif;font-size:21px;font-weight:bold;color:#444;font-style:italic;">К</div>
<div class="t" style="left:393.5px;top:168.12px;font-family:'Liberation Sans',sans-serif;font-size:21px;font-weight:bold;color:#444;">Ч</div>
<div class="t" style="left:441.5px;top:169.92px;font-family:'Liberation Sans',sans-serif;font-size:19px;font-weight:normal;color:#5a5a5a;letter-spacing:-2.820px;">abc</div>
<div class="t" style="left:480px;top:172.03px;font-family:'Liberation Sans',sans-serif;font-size:16.5px;font-weight:bold;color:#555;">X</div>
<div class="t" style="left:493.8px;top:181.88px;font-family:'Liberation Sans',sans-serif;font-size:9px;font-weight:normal;color:#4a7ab4;">2</div>
<div class="t" style="left:514.6px;top:172.03px;font-family:'Liberation Sans',sans-serif;font-size:16.5px;font-weight:bold;color:#555;">X</div>
<div class="t" style="left:527.6px;top:166.98px;font-family:'Liberation Sans',sans-serif;font-size:9px;font-weight:normal;color:#4a7ab4;">2</div>
<div class="t" style="left:555.5px;top:166.68px;font-family:'Liberation Sans',sans-serif;font-size:24px;font-weight:bold;color:#fff;-webkit-text-stroke:1.3px #5b8ccc;">A</div>
<div class="t" style="left:601px;top:165.57px;font-family:'Liberation Sans',sans-serif;font-size:13.5px;font-weight:normal;color:#666;letter-spacing:-0.031px;">ab</div>
<div class="t" style="left:657.5px;top:167.85px;font-family:'Liberation Sans',sans-serif;font-size:20.5px;font-weight:bold;color:#555;">A</div>
<div class="t" style="left:1015px;top:123.18px;font-family:'Liberation Sans',sans-serif;font-size:24px;font-weight:bold;color:#555;">¶</div>
<div class="t" style="left:1076px;top:170.96px;font-family:'Liberation Sans',sans-serif;font-size:17.3px;font-weight:normal;color:#666;letter-spacing:-0.556px;">¶ Table Par...</div>
<div class="t" style="left:1184px;top:170.96px;font-family:'Liberation Sans',sans-serif;font-size:17.3px;font-weight:normal;color:#666;letter-spacing:-0.264px;">¶ Абзац с...</div>
<div class="t" style="left:1292px;top:170.96px;font-family:'Liberation Sans',sans-serif;font-size:17.3px;font-weight:normal;color:#666;letter-spacing:-0.526px;">¶ Без инте...</div>
<div class="t" style="left:1400px;top:170.96px;font-family:'Liberation Sans',sans-serif;font-size:17.3px;font-weight:normal;color:#666;letter-spacing:-0.059px;">¶ Обычный</div>
<div class="t" style="left:1508px;top:170.96px;font-family:'Liberation Sans',sans-serif;font-size:17.3px;font-weight:normal;color:#666;letter-spacing:-0.045px;">¶ Основн...</div>
<div class="t" style="left:366.7px;top:246.27px;font-family:'Liberation Sans',sans-serif;font-size:13.5px;font-weight:normal;color:#444;">2</div>
<div class="t" style="left:423.35px;top:246.27px;font-family:'Liberation Sans',sans-serif;font-size:13.5px;font-weight:normal;color:#444;">1</div>
<div class="t" style="left:536.65px;top:246.27px;font-family:'Liberation Sans',sans-serif;font-size:13.5px;font-weight:normal;color:#444;">1</div>
<div class="t" style="left:593.3px;top:246.27px;font-family:'Liberation Sans',sans-serif;font-size:13.5px;font-weight:normal;color:#444;">2</div>
<div class="t" style="left:649.95px;top:246.27px;font-family:'Liberation Sans',sans-serif;font-size:13.5px;font-weight:normal;color:#444;">3</div>
<div class="t" style="left:706.6px;top:246.27px;font-family:'Liberation Sans',sans-serif;font-size:13.5px;font-weight:normal;color:#444;">4</div>
<div class="t" style="left:763.25px;top:246.27px;font-family:'Liberation Sans',sans-serif;font-size:13.5px;font-weight:normal;color:#444;">5</div>
<div class="t" style="left:819.9px;top:246.27px;font-family:'Liberation Sans',sans-serif;font-size:13.5px;font-weight:normal;color:#444;">6</div>
<div class="t" style="left:876.55px;top:246.27px;font-family:'Liberation Sans',sans-serif;font-size:13.5px;font-weight:normal;color:#444;">7</div>
<div class="t" style="left:933.2px;top:246.27px;font-family:'Liberation Sans',sans-serif;font-size:13.5px;font-weight:normal;color:#444;">8</div>
<div class="t" style="left:989.8499999999999px;top:246.27px;font-family:'Liberation Sans',sans-serif;font-size:13.5px;font-weight:normal;color:#444;">9</div>
<div class="t" style="left:1043.2px;top:246.27px;font-family:'Liberation Sans',sans-serif;font-size:13.5px;font-weight:normal;color:#444;">10</div>
<div class="t" style="left:1099.8500000000001px;top:246.27px;font-family:'Liberation Sans',sans-serif;font-size:13.5px;font-weight:normal;color:#444;">11</div>
<div class="t" style="left:1156.5px;top:246.27px;font-family:'Liberation Sans',sans-serif;font-size:13.5px;font-weight:normal;color:#444;">12</div>
<div class="t" style="left:1213.1499999999999px;top:246.27px;font-family:'Liberation Sans',sans-serif;font-size:13.5px;font-weight:normal;color:#444;">13</div>
<div class="t" style="left:1269.8px;top:246.27px;font-family:'Liberation Sans',sans-serif;font-size:13.5px;font-weight:normal;color:#444;">14</div>
<div class="t" style="left:1326.45px;top:246.27px;font-family:'Liberation Sans',sans-serif;font-size:13.5px;font-weight:normal;color:#444;">15</div>
<div class="t" style="left:1383.1000000000001px;top:246.27px;font-family:'Liberation Sans',sans-serif;font-size:13.5px;font-weight:normal;color:#444;">16</div>
<div class="t" style="left:1439.75px;top:246.27px;font-family:'Liberation Sans',sans-serif;font-size:13.5px;font-weight:normal;color:#444;">17</div>
<div class="t" style="left:1496.3999999999999px;top:246.27px;font-family:'Liberation Sans',sans-serif;font-size:13.5px;font-weight:normal;color:#444;">18</div>
<div class="a" style="left:0px;top:993px;width:1919px;height:33px;background:#f1f1f1;"></div>
<div class="a" style="left:0px;top:993px;width:1919px;height:1px;background:#d0d0d0;"></div>
<div class="a" style="left:0px;top:1026px;width:1919px;height:29px;background:#1c1c1c;"></div>
<div class="a" style="left:0px;top:5px;width:1919px;height:1px;background:#0e1626;"></div>
<div class="a" style="left:0px;top:6px;width:1919px;height:1px;background:#38598f;"></div>
<div class="a" style="left:0px;top:1025px;width:1919px;height:1px;background:#fafafa;"></div>
<div class="a" style="left:0px;top:1026px;width:1919px;height:1px;background:#0c0c0c;"></div>
<svg style="left:290px;top:995px;" width="40" height="30" viewBox="0 0 40 30"><path d="M8.6 5.6 H15.8 L17.5 7.3 L19.2 5.6 H26.5 V8.8 M26.5 18 V20.6 H19.2 L17.5 22.3 L15.8 20.6 H8.6 Z" fill="none" stroke="#666" stroke-width="1"/><path d="M17.5 7.3 V22.5" stroke="#666" stroke-width="1"/><path d="M16 21.5 L17.5 23.2 L19 21.5" fill="#666"/><path d="M21.8 10.5 L28.4 17.1 M28.4 10.5 L21.8 17.1" stroke="#6a6a6a" stroke-width="2.3"/></svg>
<svg style="left:1545px;top:1000px;" width="19" height="18" viewBox="0 0 19 18"><path d="M0.5 0.5 H8 L9.5 2 L11 0.5 H18.5 V16.5 H11 L9.5 18 L8 16.5 H0.5 Z" fill="none" stroke="#666"/><path d="M9.5 2 V17.5 M2.5 4H7M2.5 7H7M2.5 10H7M2.5 13H7M12 4H16.5M12 7H16.5M12 10H16.5M12 13H16.5" stroke="#666" stroke-width="1"/></svg>
<div class="a" style="left:1577px;top:994px;width:45px;height:32px;background:#c8c8c8;"></div>
<svg style="left:1590px;top:1000px;" width="19" height="18" viewBox="0 0 19 18"><rect x="0.5" y="0.5" width="18" height="17" fill="none" stroke="#666"/><path d="M3 4H16M3 7H16M3 10H16M3 13H16" stroke="#666" stroke-width="1"/></svg>
<svg style="left:1635px;top:1000px;" width="21" height="20" viewBox="0 0 21 20"><path d="M0.5 0.5 H15.5 V8 M0.5 0.5 V16.5 H9" fill="none" stroke="#666"/><path d="M3 4H13M3 7H13M3 10H9M3 13H8" stroke="#666"/><circle cx="15" cy="14.5" r="5.2" fill="#666" stroke="#f1f1f1" stroke-width="1"/><path d="M11.5 13 Q14 12 14.5 15 Q16 17 18 15" stroke="#f1f1f1" stroke-width="1" fill="none"/></svg>
<div class="a" style="left:1673px;top:1007.8px;width:11px;height:2.4px;background:#666;"></div>
<div class="a" style="left:1690px;top:1008px;width:148px;height:2px;background:#a8a8a8;"></div>
<div class="a" style="left:1760px;top:1001px;width:8px;height:17px;background:#777;"></div>
<div class="a" style="left:1844px;top:1007.8px;width:11.5px;height:2.4px;background:#666;"></div>
<div class="a" style="left:1848.5px;top:1003.2px;width:2.4px;height:11.5px;background:#666;"></div>
<div class="t" style="left:8.3px;top:1002.10px;font-family:'Liberation Sans',sans-serif;font-size:15px;font-weight:normal;color:#444;letter-spacing:0.215px;">Страница 3 из 15</div>
<div class="t" style="left:154px;top:1002.10px;font-family:'Liberation Sans',sans-serif;font-size:15px;font-weight:normal;color:#444;letter-spacing:0.017px;">Число слов: 4072</div>
<div class="t" style="left:337.7px;top:1002.10px;font-family:'Liberation Sans',sans-serif;font-size:15px;font-weight:normal;color:#444;letter-spacing:0.307px;">украинский</div>
<div class="t" style="left:1869.5px;top:1001.90px;font-family:'Liberation Sans',sans-serif;font-size:15px;font-weight:normal;color:#444;letter-spacing:-0.137px;">100 %</div>
<div class="a" style="left:1668px;top:113px;width:230px;height:771px;background:#232323;border-radius:3px;box-shadow:0 2px 8px rgba(0,0,0,0.35);"></div>
<svg style="left:1699px;top:116px;overflow:hidden" width="168" height="106" viewBox="0 0 168 106"><defs><filter id="f1699_116" x="-20%" y="-20%" width="140%" height="140%"><feGaussianBlur stdDeviation="0.9"/></filter></defs><g filter="url(#f1699_116)">
<defs><linearGradient id="w1" x1="0" y1="0" x2="1" y2="0"><stop offset="0" stop-color="#d2c8c8"/><stop offset="0.45" stop-color="#ebe3e2"/><stop offset="1" stop-color="#e8e0df"/></linearGradient>
<linearGradient id="tb1" x1="0" y1="0" x2="0" y2="1"><stop offset="0" stop-color="#cfa288"/><stop offset="1" stop-color="#b98262"/></linearGradient></defs>
<rect x="-5" y="-5" width="180" height="120" fill="url(#w1)"/>
<rect x="63" y="0" width="14" height="4" fill="#8a7f7a"/><rect x="87" y="0" width="18" height="6" fill="#8a7f7a"/><rect x="89" y="1" width="14" height="3.5" fill="#e8e0e0"/><rect x="65" y="0" width="10" height="2.5" fill="#e8e0e0"/>
<ellipse cx="12" cy="20" rx="10" ry="4" transform="rotate(-30 12 20)" fill="#2c3a30"/><ellipse cx="24" cy="14" rx="9" ry="4" transform="rotate(-15 24 14)" fill="#2c3a30"/><ellipse cx="34" cy="22" rx="8" ry="4" transform="rotate(30 34 22)" fill="#2c3a30"/><ellipse cx="44" cy="10" rx="9" ry="3.5" transform="rotate(-50 44 10)" fill="#2c3a30"/><ellipse cx="52" cy="26" rx="8" ry="4" transform="rotate(40 52 26)" fill="#2c3a30"/><ellipse cx="60" cy="6" rx="7" ry="3" transform="rotate(-70 60 6)" fill="#2c3a30"/><ellipse cx="20" cy="32" rx="9" ry="3.5" transform="rotate(20 20 32)" fill="#2c3a30"/><ellipse cx="64" cy="34" rx="9" ry="3.5" transform="rotate(60 64 34)" fill="#2c3a30"/><ellipse cx="70" cy="46" rx="7" ry="3" transform="rotate(75 70 46)" fill="#2c3a30"/><ellipse cx="40" cy="34" rx="6" ry="3" transform="rotate(-10 40 34)" fill="#2c3a30"/><ellipse cx="8" cy="28" rx="6" ry="3" transform="rotate(10 8 28)" fill="#2c3a30"/>
<path d="M44 4 Q47 20 50 36" stroke="#2c3a30" stroke-width="1.5" fill="none"/>
<rect x="49" y="34" width="13" height="40" fill="#d3cbca"/>
<ellipse cx="31" cy="31" rx="10" ry="8" fill="#a39d9a"/>
<ellipse cx="31" cy="38" rx="8" ry="9" fill="#dcc4b8"/>
<path d="M24 37 H38" stroke="#555" stroke-width="1"/>
<path d="M0 52 Q8 45 22 47 L42 47 Q56 50 58 80 L0 80 Z" fill="#8a8282"/>
<ellipse cx="18.8" cy="51.1" rx="1.6" ry="3.1" fill="#c9c0c0"/><ellipse cx="5.5" cy="65.8" rx="2.0" ry="1.7" fill="#8a8080"/><ellipse cx="24.3" cy="54.2" rx="2.6" ry="3.2" fill="#8a8080"/><ellipse cx="7.2" cy="53.6" rx="3.0" ry="1.6" fill="#c9c0c0"/><ellipse cx="34.0" cy="47.7" rx="1.6" ry="3.2" fill="#f4f2f2"/><ellipse cx="16.8" cy="50.9" rx="2.9" ry="2.6" fill="#f4f2f2"/><ellipse cx="39.6" cy="49.5" rx="3.1" ry="2.2" fill="#8a8080"/><ellipse cx="31.8" cy="48.1" rx="3.0" ry="2.5" fill="#f4f2f2"/><ellipse cx="30.8" cy="72.4" rx="3.0" ry="2.4" fill="#1a1a1a"/><ellipse cx="17.4" cy="73.0" rx="3.4" ry="1.7" fill="#c9c0c0"/><ellipse cx="17.4" cy="62.8" rx="3.3" ry="2.1" fill="#1a1a1a"/><ellipse cx="56.9" cy="50.0" rx="1.9" ry="2.2" fill="#1a1a1a"/><ellipse cx="54.1" cy="60.3" rx="1.7" ry="2.6" fill="#c9c0c0"/><ellipse cx="45.8" cy="73.8" rx="3.2" ry="2.7" fill="#1a1a1a"/><ellipse cx="33.6" cy="61.5" rx="3.9" ry="2.4" fill="#f4f2f2"/><ellipse cx="38.5" cy="48.1" rx="2.3" ry="2.7" fill="#c9c0c0"/><ellipse cx="39.5" cy="61.2" rx="2.5" ry="2.8" fill="#c9c0c0"/><ellipse cx="1.3" cy="61.7" rx="3.0" ry="2.5" fill="#f4f2f2"/><ellipse cx="12.7" cy="55.8" rx="2.1" ry="2.3" fill="#c9c0c0"/><ellipse cx="50.5" cy="48.7" rx="2.5" ry="2.1" fill="#1a1a1a"/><ellipse cx="7.9" cy="60.6" rx="2.2" ry="2.3" fill="#8a8080"/><ellipse cx="20.8" cy="76.1" rx="1.9" ry="1.9" fill="#f4f2f2"/><ellipse cx="13.5" cy="53.9" rx="3.6" ry="1.9" fill="#1a1a1a"/><ellipse cx="16.4" cy="51.0" rx="2.4" ry="2.6" fill="#8a8080"/><ellipse cx="55.3" cy="69.5" rx="3.9" ry="2.8" fill="#8a8080"/><ellipse cx="42.9" cy="61.5" rx="3.5" ry="2.3" fill="#c9c0c0"/><ellipse cx="23.1" cy="49.5" rx="2.5" ry="1.9" fill="#c9c0c0"/><ellipse cx="57.1" cy="61.0" rx="2.4" ry="1.6" fill="#f4f2f2"/><ellipse cx="0.0" cy="51.1" rx="3.9" ry="2.7" fill="#f4f2f2"/><ellipse cx="4.1" cy="53.1" rx="1.9" ry="2.0" fill="#1a1a1a"/><ellipse cx="20.1" cy="58.4" rx="1.8" ry="2.5" fill="#f4f2f2"/><ellipse cx="56.7" cy="62.3" rx="1.7" ry="1.7" fill="#1a1a1a"/><ellipse cx="19.9" cy="55.0" rx="1.9" ry="1.5" fill="#c9c0c0"/><ellipse cx="55.2" cy="64.0" rx="3.2" ry="3.3" fill="#f4f2f2"/><ellipse cx="44.0" cy="56.1" rx="3.7" ry="2.9" fill="#c9c0c0"/><ellipse cx="15.1" cy="58.5" rx="2.4" ry="1.9" fill="#f4f2f2"/><ellipse cx="31.4" cy="63.1" rx="2.1" ry="3.1" fill="#c9c0c0"/><ellipse cx="57.1" cy="75.0" rx="3.5" ry="3.0" fill="#f4f2f2"/><ellipse cx="13.2" cy="63.6" rx="3.3" ry="3.5" fill="#1a1a1a"/><ellipse cx="45.8" cy="62.1" rx="3.2" ry="3.4" fill="#f4f2f2"/><ellipse cx="25.9" cy="77.9" rx="3.9" ry="2.2" fill="#1a1a1a"/><ellipse cx="12.8" cy="53.7" rx="2.3" ry="2.5" fill="#f4f2f2"/><ellipse cx="57.1" cy="66.7" rx="2.7" ry="2.8" fill="#f4f2f2"/><ellipse cx="46.4" cy="48.9" rx="1.8" ry="2.3" fill="#c9c0c0"/><ellipse cx="41.3" cy="52.8" rx="2.6" ry="2.8" fill="#f4f2f2"/><ellipse cx="5.0" cy="78.2" rx="2.5" ry="2.3" fill="#c9c0c0"/><ellipse cx="54.9" cy="70.6" rx="4.0" ry="1.6" fill="#f4f2f2"/><ellipse cx="34.3" cy="61.8" rx="1.9" ry="3.2" fill="#c9c0c0"/><ellipse cx="56.9" cy="68.3" rx="1.9" ry="2.6" fill="#1a1a1a"/><ellipse cx="1.2" cy="73.2" rx="3.1" ry="2.6" fill="#c9c0c0"/><ellipse cx="54.2" cy="60.7" rx="3.6" ry="1.9" fill="#f4f2f2"/><ellipse cx="14.6" cy="56.0" rx="3.4" ry="2.2" fill="#f4f2f2"/><ellipse cx="31.6" cy="74.4" rx="3.8" ry="2.2" fill="#f4f2f2"/><ellipse cx="26.6" cy="65.8" rx="2.6" ry="3.3" fill="#8a8080"/><ellipse cx="29.1" cy="64.1" rx="2.8" ry="3.2" fill="#8a8080"/><ellipse cx="45.0" cy="66.7" rx="1.9" ry="2.4" fill="#f4f2f2"/><ellipse cx="42.1" cy="64.9" rx="3.2" ry="2.6" fill="#1a1a1a"/><ellipse cx="28.0" cy="72.4" rx="1.6" ry="1.9" fill="#8a8080"/><ellipse cx="2.4" cy="49.3" rx="2.9" ry="3.0" fill="#1a1a1a"/><ellipse cx="52.9" cy="61.1" rx="3.9" ry="2.7" fill="#8a8080"/><ellipse cx="11.6" cy="55.4" rx="2.8" ry="2.5" fill="#8a8080"/><ellipse cx="54.6" cy="69.8" rx="3.8" ry="3.3" fill="#1a1a1a"/><ellipse cx="11.8" cy="61.2" rx="1.8" ry="2.4" fill="#1a1a1a"/><ellipse cx="4.2" cy="54.2" rx="2.0" ry="2.1" fill="#f4f2f2"/><ellipse cx="7.1" cy="72.4" rx="3.1" ry="2.2" fill="#c9c0c0"/><ellipse cx="14.7" cy="50.7" rx="2.0" ry="3.4" fill="#1a1a1a"/><ellipse cx="23.1" cy="62.6" rx="3.6" ry="1.8" fill="#c9c0c0"/><ellipse cx="25.0" cy="63.5" rx="2.6" ry="2.2" fill="#1a1a1a"/><ellipse cx="5.3" cy="58.4" rx="2.9" ry="2.4" fill="#1a1a1a"/><ellipse cx="1.0" cy="57.3" rx="2.2" ry="3.4" fill="#8a8080"/>
<ellipse cx="99" cy="44" rx="18" ry="20" fill="#4e3027"/>
<ellipse cx="100" cy="47" rx="8" ry="10" fill="#cfa898"/>
<path d="M66 80 Q68 58 82 55 L100 60 Q112 62 118 80 Z" fill="#e4d0bc"/>
<path d="M82 50 Q78 72 90 80 L95 60 Z M114 46 Q122 70 112 82 L104 62 Z" fill="#54342a"/>
<rect x="95" y="62" width="36" height="24" rx="2" fill="#141414"/>
<rect x="107" y="66" width="15" height="8" fill="#8a9a90"/>
<ellipse cx="156" cy="42" rx="10" ry="10" fill="#4a3028"/>
<ellipse cx="157" cy="47" rx="6" ry="8" fill="#d6b6a6"/>
<path d="M134 82 Q134 62 144 56 Q156 58 160 82 Z" fill="#7e7268"/>
<ellipse cx="140" cy="58" rx="5" ry="4" fill="#5e564e"/>
<path d="M150 48 L168 36 L168 62 L152 72 Z" fill="#3352a6"/>
<path d="M152 72 L168 62 L168 82 L154 84 Z" fill="#e6d64c"/>
<path d="M149 46 L151 86" stroke="#f4f4f4" stroke-width="1.2"/>
<rect x="-5" y="79" width="180" height="32" fill="url(#tb1)"/>
<rect x="0" y="81" width="60" height="7" fill="#f2eeee"/><rect x="2" y="83" width="13" height="3" fill="#3a3a50"/>
<rect x="64" y="81" width="24" height="6" fill="#5a2a2a"/><rect x="64" y="86" width="24" height="3" fill="#f0f0f0"/>
<rect x="126" y="80" width="42" height="7" fill="#ece8e4"/><rect x="130" y="87" width="38" height="9" fill="#dfe5ee"/>
<path d="M138 84 L146 110" stroke="#3a2a20" stroke-width="1"/>
</g></svg>
<div class="a" style="left:1671px;top:222px;width:224px;height:20.5px;background:#2f2b2b;"></div>
<svg style="left:1671px;top:244px;overflow:hidden" width="224" height="126" viewBox="0 0 224 126"><defs><filter id="f1671_244" x="-20%" y="-20%" width="140%" height="140%"><feGaussianBlur stdDeviation="1.2"/></filter></defs><g filter="url(#f1671_244)">
<defs><linearGradient id="w2" x1="0" y1="0" x2="1" y2="0"><stop offset="0" stop-color="#e6f0de"/><stop offset="0.12" stop-color="#f7faf2"/><stop offset="0.55" stop-color="#fbfcf8"/><stop offset="0.8" stop-color="#f1f6ec"/><stop offset="1" stop-color="#cfe0c8"/></linearGradient></defs>
<rect x="-5" y="-5" width="240" height="140" fill="url(#w2)"/>
<rect x="100" y="-5" width="18" height="140" fill="#eef2e2" opacity="0.7"/>
<rect x="196" y="-5" width="8" height="140" fill="#dfead8" opacity="0.8"/>
<path d="M86 122 Q80 66 95 38 Q115 12 146 15 Q180 22 188 64 Q192 104 184 122 L160 126 L110 126 Z" fill="#8e5a50"/>
<path d="M100 40 Q120 22 150 26 Q170 32 176 50" stroke="#a87062" stroke-width="6" fill="none" opacity="0.6"/>
<ellipse cx="139" cy="90" rx="33" ry="40" fill="#b48a88"/>
<path d="M100 62 Q112 40 142 42 Q168 44 178 62 Q160 54 140 54 Q118 54 100 62 Z" fill="#8e5a50"/>
<rect x="101" y="59" width="35" height="26" rx="7" fill="#ab8282" stroke="#5a1c2c" stroke-width="3.2"/>
<rect x="141" y="58" width="34" height="26" rx="7" fill="#ab8282" stroke="#5a1c2c" stroke-width="3.2"/>
<ellipse cx="139" cy="111" rx="9" ry="2.5" fill="#9a6a70"/>
<path d="M104 130 Q116 118 136 124 Q160 118 172 108 Q200 104 224 114 L224 130 Z" fill="#c7a3a8"/>
<ellipse cx="180" cy="118" rx="6" ry="4" fill="#e8e0e6"/><ellipse cx="200" cy="122" rx="6" ry="4" fill="#7a4e66"/><ellipse cx="214" cy="114" rx="5" ry="4" fill="#f0eaec"/>
</g></svg>
<div class="a" style="left:1671.6px;top:350.6px;width:133px;height:19px;background:rgba(35,35,35,0.82);"></div>
<div class="a" style="left:1669.3px;top:370.2px;width:227.4px;height:129px;background:#a4c06a;"></div>
<svg style="left:1671px;top:371.6px;overflow:hidden" width="224" height="126" viewBox="0 0 224 126"><defs><filter id="f1671_371" x="-20%" y="-20%" width="140%" height="140%"><feGaussianBlur stdDeviation="1.4"/></filter></defs><g filter="url(#f1671_371)">
<defs><linearGradient id="w3" x1="0" y1="0" x2="1" y2="0"><stop offset="0" stop-color="#b9c0b8"/><stop offset="0.5" stop-color="#c4c6bb"/><stop offset="1" stop-color="#cccbbf"/></linearGradient></defs>
<rect x="-5" y="-5" width="240" height="140" fill="url(#w3)"/>
<rect x="-5" y="-5" width="240" height="30" fill="#d6d5c4" opacity="0.8"/>
<rect x="8" y="2" width="60" height="42" rx="14" fill="#cbc2b6"/>
<path d="M80 130 Q84 70 94 34 Q108 8 132 8 Q158 8 170 30 Q182 70 206 130 Z" fill="#3a2f2b"/>
<ellipse cx="128" cy="70" rx="28" ry="45" fill="#d7bdb2"/>
<path d="M96 40 Q108 14 132 14 Q156 14 166 38 Q150 26 130 26 Q110 26 96 40 Z" fill="#3a2f2b"/>
<ellipse cx="113" cy="58" rx="6.5" ry="3" fill="#6e6266"/><ellipse cx="143" cy="58" rx="6.5" ry="3" fill="#6e6266"/>
<ellipse cx="128" cy="72" rx="3" ry="6" fill="#ecdcd6"/>
<ellipse cx="128" cy="92" rx="9" ry="2.8" fill="#b8847e"/>
<path d="M96 130 Q110 114 130 118 Q160 112 200 126 L200 130 Z" fill="#1f1b1b"/>
</g></svg>
<div class="a" style="left:1672px;top:478.4px;width:109.6px;height:19.2px;background:rgba(40,40,40,0.85);"></div>
<svg style="left:1735px;top:500.2px;overflow:hidden" width="95" height="125.4" viewBox="0 0 95 125.4"><defs><filter id="f1735_500" x="-20%" y="-20%" width="140%" height="140%"><feGaussianBlur stdDeviation="1.0"/></filter></defs><g filter="url(#f1735_500)">
<defs><linearGradient id="w4" x1="0" y1="0" x2="1" y2="0"><stop offset="0" stop-color="#e5b55c"/><stop offset="0.45" stop-color="#eed08f"/><stop offset="0.75" stop-color="#f2e1b8"/><stop offset="1" stop-color="#ebe4d8"/></linearGradient></defs>
<rect x="-5" y="-5" width="105" height="140" fill="url(#w4)"/>
<path d="M0 0 H95 V14 L12 24 Z" fill="#f0d69c"/>
<path d="M0 0 L14 26 V125 H0 Z" fill="#dca750"/>
<rect x="70" y="0" width="25" height="125" fill="#f1ece2"/>
<rect x="33" y="24" width="15" height="17" fill="#bba574"/>
<ellipse cx="44" cy="70" rx="10" ry="12" fill="#c6a792"/>
<rect x="34" y="64" width="20" height="4" fill="#6a5a50" opacity="0.6"/>
<path d="M8 125 Q14 92 34 84 L44 80 L62 86 Q82 94 90 125 Z" fill="#2a2522"/>
<path d="M40 84 L44 90 L48 84" stroke="#cfcfcf" stroke-width="2" fill="none"/>
</g></svg>
<div class="a" style="left:1672px;top:607px;width:70px;height:18.6px;background:rgba(40,40,40,0.85);"></div>
<div class="a" style="left:1743px;top:651px;width:80px;height:80px;background:#0a9aaa;"></div>
<div class="a" style="left:1671.6px;top:735.5px;width:126.3px;height:18.2px;background:#2c2c2c;"></div>
<svg style="left:1671px;top:755.8px;overflow:hidden" width="224" height="126.2" viewBox="0 0 224 126.2"><defs><filter id="f1671_755" x="-20%" y="-20%" width="140%" height="140%"><feGaussianBlur stdDeviation="1.0"/></filter></defs><g filter="url(#f1671_755)">
<rect x="-5" y="-5" width="240" height="140" fill="#54443f"/>
<rect x="-5" y="-5" width="25" height="140" fill="#a8937e"/>
<rect x="20" y="-5" width="22" height="140" fill="#5e4c46"/>
<rect x="42" y="-5" width="16" height="140" fill="#343b4c"/>
<rect x="58" y="-5" width="80" height="140" fill="#5a4843"/>
<rect x="74" y="10" width="56" height="48" fill="#62504a"/>
<rect x="74" y="64" width="56" height="50" fill="#5e4c47"/>
<rect x="128" y="-5" width="8" height="140" fill="#7a6862"/>
<rect x="136" y="-5" width="100" height="140" fill="#eeeeee"/>
<rect x="190" y="-5" width="45" height="140" fill="#f7f7f7"/>
<path d="M126 104 Q118 40 140 16 Q162 -2 188 8 Q214 26 210 80 Q206 104 200 110 L180 96 L150 100 Z" fill="#3b2b29"/>
<ellipse cx="168" cy="70" rx="29" ry="40" fill="#dcc4c0"/>
<path d="M138 50 Q146 18 170 16 Q196 18 200 48 Q184 32 166 34 Q150 36 138 50 Z" fill="#3b2b29"/>
<ellipse cx="152" cy="56" rx="6" ry="2.5" fill="#8a7070"/><ellipse cx="178" cy="54" rx="6" ry="2.5" fill="#8a7070"/>
<ellipse cx="166" cy="84" rx="8" ry="2.6" fill="#b08080"/>
<path d="M104 130 Q110 106 130 102 Q150 104 160 126 L160 130 Z" fill="#bcd0e4"/>
<path d="M150 130 Q160 104 176 100 Q186 104 190 130 Z" fill="#e6d6d4"/>
<path d="M184 130 Q192 98 210 94 Q226 100 224 130 Z" fill="#ece2e0"/>
<path d="M24 60 H36 M24 56 V64 H30 V56 Z" stroke="#9ab0d0" stroke-width="1.6" fill="none"/>
</g></svg>
<div class="a" style="left:1672px;top:863.4px;width:96px;height:18.6px;background:rgba(40,40,40,0.85);"></div>
<svg style="left:1674px;top:353.5px;" width="14" height="14" viewBox="0 0 14 14"><rect x="4" y="0.5" width="6" height="9" rx="3" fill="#e25b5b"/><path d="M2 7 Q2 11.5 7 11.5 Q12 11.5 12 7" stroke="#e25b5b" stroke-width="1.3" fill="none"/><rect x="6.3" y="11" width="1.4" height="2.5" fill="#e25b5b"/><rect x="3.5" y="12.8" width="7" height="1.2" fill="#e25b5b"/><path d="M0.8 13.5 L13 0.5" stroke="#f08080" stroke-width="1.3"/></svg>
<svg style="left:1674px;top:737px;" width="14" height="14" viewBox="0 0 14 14"><rect x="4" y="0.5" width="6" height="9" rx="3" fill="#e25b5b"/><path d="M2 7 Q2 11.5 7 11.5 Q12 11.5 12 7" stroke="#e25b5b" stroke-width="1.3" fill="none"/><rect x="6.3" y="11" width="1.4" height="2.5" fill="#e25b5b"/><rect x="3.5" y="12.8" width="7" height="1.2" fill="#e25b5b"/><path d="M0.8 13.5 L13 0.5" stroke="#f08080" stroke-width="1.3"/></svg>
<svg style="left:1674px;top:865.5px;" width="14" height="14" viewBox="0 0 14 14"><rect x="4" y="0.5" width="6" height="9" rx="3" fill="#e25b5b"/><path d="M2 7 Q2 11.5 7 11.5 Q12 11.5 12 7" stroke="#e25b5b" stroke-width="1.3" fill="none"/><rect x="6.3" y="11" width="1.4" height="2.5" fill="#e25b5b"/><rect x="3.5" y="12.8" width="7" height="1.2" fill="#e25b5b"/><path d="M0.8 13.5 L13 0.5" stroke="#f08080" stroke-width="1.3"/></svg>
<div class="t" style="left:1675px;top:226.99px;font-family:'Liberation Sans',sans-serif;font-size:12.3px;font-weight:normal;color:#f2f2f2;letter-spacing:0.070px;">Валентина Парандій, експерт НАЗ...</div>
<div class="t" style="left:1693.4px;top:354.49px;font-family:'Liberation Sans',sans-serif;font-size:12.3px;font-weight:normal;color:#f2f2f2;letter-spacing:0.357px;">Антоніна Гуменюк</div>
<div class="t" style="left:1675px;top:482.89px;font-family:'Liberation Sans',sans-serif;font-size:12.3px;font-weight:normal;color:#f2f2f2;letter-spacing:0.514px;">Ганна Цимбалюк</div>
<div class="t" style="left:1675px;top:610.89px;font-family:'Liberation Sans',sans-serif;font-size:12.3px;font-weight:normal;color:#f2f2f2;letter-spacing:0.164px;">Яровой В.I</div>
<div class="t" style="left:1770.6px;top:670.80px;font-family:'Liberation Sans',sans-serif;font-size:43px;font-weight:normal;color:#ffffff;">И</div>
<div class="t" style="left:1693.5px;top:738.59px;font-family:'Liberation Sans',sans-serif;font-size:12.3px;font-weight:normal;color:#f2f2f2;letter-spacing:0.642px;">Ирина Мурашко</div>
<div class="t" style="left:1693px;top:866.59px;font-family:'Liberation Sans',sans-serif;font-size:12.3px;font-weight:normal;color:#f2f2f2;letter-spacing:0.211px;">Галина Оліх</div>



</body></html>
